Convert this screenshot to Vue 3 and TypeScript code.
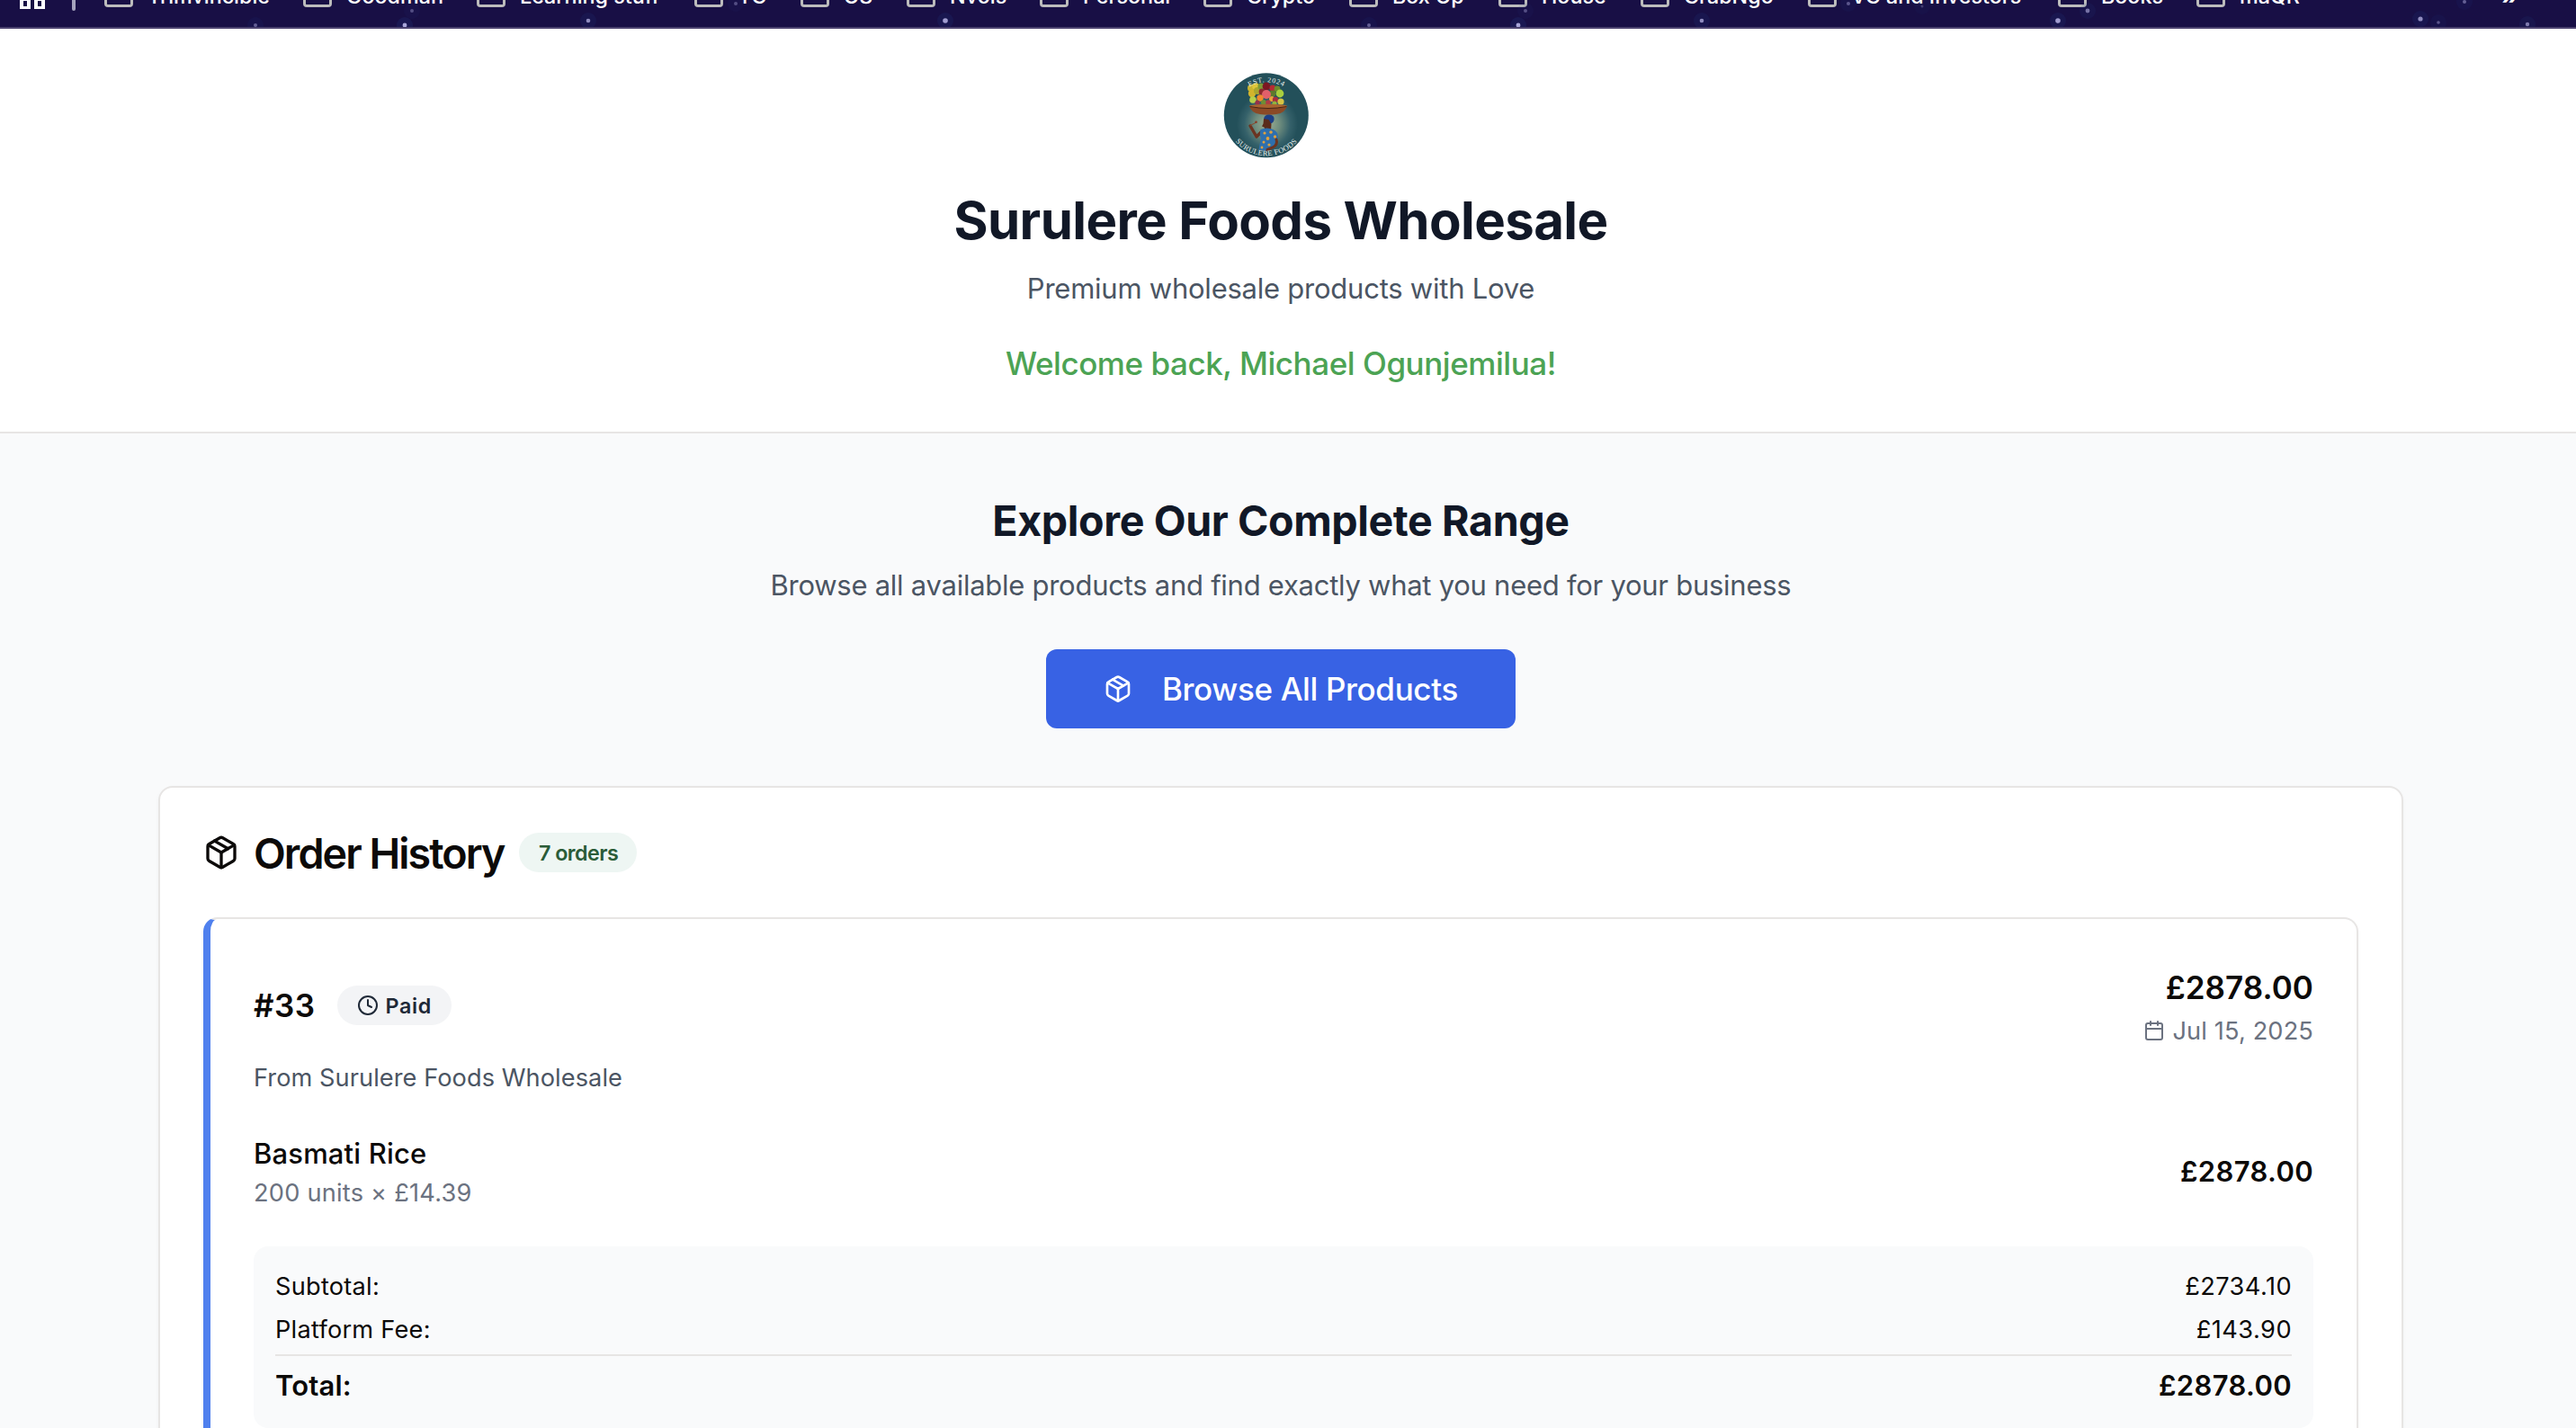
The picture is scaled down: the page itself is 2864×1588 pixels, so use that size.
<script setup lang="ts">
interface Bookmark {
  label: string
  width: number
}

// Width is the pitch from one folder to the next.
const bookmarks: Bookmark[] = [
  { label: 'Trimvincible', width: 221 },
  { label: 'Goodman', width: 193 },
  { label: 'Learning stuff', width: 242 },
  { label: 'YC', width: 118 },
  { label: 'US', width: 118 },
  { label: 'Nvois', width: 148 },
  { label: 'Personal', width: 182 },
  { label: 'Crypto', width: 162 },
  { label: 'Box Up', width: 166 },
  { label: 'House', width: 158 },
  { label: 'CrabNgo', width: 186 },
  { label: 'VC and Investors', width: 278 },
  { label: 'Books', width: 154 },
  { label: 'maQR', width: 120 },
]

interface Star {
  x: number
  y: number
  r: number
  o: number
}

const stars: Star[] = [
  { x: 284, y: 28, r: 2, o: 0.45 },
  { x: 450, y: 28, r: 2.4, o: 0.85 },
  { x: 458, y: 12, r: 2, o: 0.35 },
  { x: 654, y: 23, r: 2.3, o: 0.7 },
  { x: 818, y: 4, r: 2, o: 0.35 },
  { x: 1051, y: 23, r: 2.8, o: 0.8 },
  { x: 1522, y: 28, r: 2, o: 0.45 },
  { x: 1688, y: 28, r: 2.4, o: 0.85 },
  { x: 1696, y: 12, r: 2, o: 0.35 },
  { x: 1892, y: 23, r: 2.3, o: 0.7 },
  { x: 2055, y: 4, r: 2, o: 0.4 },
  { x: 2137, y: 7, r: 1.5, o: 0.25 },
  { x: 2288, y: 23, r: 2.8, o: 0.8 },
  { x: 2321, y: 12, r: 2.4, o: 0.55 },
  { x: 2691, y: 21, r: 2.6, o: 0.7 },
  { x: 2711, y: 25, r: 1.8, o: 0.4 },
  { x: 2740, y: 2, r: 2, o: 0.45 },
  { x: 2810, y: 27, r: 2.2, o: 0.6 },
]

interface Fruit {
  x: number
  y: number
  r: number
  c: string
}

const fruits: Fruit[] = [
  { x: 31, y: 18, r: 4, c: '#c9b52f' },
  { x: 36, y: 16, r: 3.8, c: '#dfc73a' },
  { x: 32, y: 24, r: 4.2, c: '#d3b42c' },
  { x: 38, y: 21, r: 4, c: '#a9a72f' },
  { x: 42, y: 16, r: 3.6, c: '#7d9a35' },
  { x: 48, y: 16, r: 4.4, c: '#7c1722' },
  { x: 55, y: 18, r: 3.6, c: '#b52a33' },
  { x: 60, y: 19, r: 3.4, c: '#6d8b2d' },
  { x: 43, y: 22, r: 3.4, c: '#8f2b2e' },
  { x: 55, y: 24, r: 3.4, c: '#5d7a2c' },
  { x: 63, y: 24, r: 4.4, c: '#a9cf3e' },
  { x: 48, y: 25, r: 5, c: '#e2606a' },
  { x: 33, y: 31, r: 3.8, c: '#b6cf4a' },
  { x: 41, y: 29, r: 3.7, c: '#f08a2c' },
  { x: 38, y: 34, r: 2.6, c: '#96314a' },
  { x: 45, y: 34, r: 3, c: '#6f8f33' },
  { x: 54, y: 30, r: 3, c: '#e8a13a' },
  { x: 50, y: 34, r: 2.8, c: '#b13a45' },
  { x: 58, y: 31, r: 3.2, c: '#a82f3d' },
  { x: 64, y: 33, r: 3.6, c: '#d6c444' },
  { x: 57, y: 35, r: 2.6, c: '#93b33c' },
]

const lines: { label: string; value: string }[] = [
  { label: 'Subtotal:', value: '£2734.10' },
  { label: 'Platform Fee:', value: '£143.90' },
]
</script>

<template>
  <div class="page">
    <nav class="bookmarks">
      <svg class="stars" width="2864" height="30" viewBox="0 0 2864 30">
        <g v-for="(s, i) in stars" :key="i">
          <circle :cx="s.x" :cy="s.y" r="9" fill="#23408a" :opacity="s.o * 0.22" />
          <circle :cx="s.x" :cy="s.y" :r="s.r" fill="#c3bff0" :opacity="s.o" />
        </g>
      </svg>
      <span class="apps"><i></i><i></i></span>
      <span class="divider"></span>
      <div class="folders">
        <div v-for="b in bookmarks" :key="b.label" class="bookmark" :style="{ width: b.width + 'px' }">
          <span class="folder"></span>
          <span class="bookmark-label">{{ b.label }}</span>
        </div>
      </div>
      <span class="more">»</span>
    </nav>

    <header class="hero">
      <div class="column">
        <svg class="logo" width="96" height="96" viewBox="0 0 96 96">
          <defs>
            <radialGradient id="glow" gradientUnits="userSpaceOnUse" cx="49" cy="58" r="34">
              <stop offset="0" stop-color="#9fb093" />
              <stop offset="0.4" stop-color="#6f8d7e" />
              <stop offset="0.75" stop-color="#35616a" />
              <stop offset="1" stop-color="#23505a" />
            </radialGradient>
            <path id="arcTop" d="M11 48.300a37 37 0 0 1 74 0" />
            <path id="arcBottom" d="M2.900 48.300a45 45 0 0 0 90 0" />
          </defs>
          <circle cx="47.8" cy="48.3" r="47" fill="url(#glow)" />
          <circle v-for="(f, i) in fruits" :key="i" :cx="f.x" :cy="f.y" :r="f.r" :fill="f.c" />
          <path d="M29 38q21 5 42 0q-2 7.500-12 9q-9 1.600-18 0q-10-1.500-12-9z" fill="#8b4a26" />
          <ellipse cx="50" cy="38" rx="21" ry="2.200" fill="#a9632f" />
          <path d="M29.500 38.500q20.500 4 41 0" fill="none" stroke="#4a2313" stroke-width="1" />
          <path d="M45 52.500q.5-5 6-5q6.500 .5 5.500 6q-1.500 5-6.500 4z" fill="#1c3f86" />
          <path d="M45 52l5.500 1 3 5-.5 7-6 1-1.500-4.500-2.500-1 1.500-3z" fill="#5a2b1b" />
          <path d="M42 67l-5 5-7-12" fill="none" stroke="#6b3421" stroke-width="3.400" stroke-linejoin="round" stroke-linecap="round" />
          <path d="M30 59.500l6-3" stroke="#8a4a2c" stroke-width="1" fill="none" />
          <circle cx="36.500" cy="55.800" r="1.300" fill="#8a3a24" />
          <path d="M41.500 64q7-3 14 0q5.500 2 5.500 10l-3 3-2 8q-8 4-16.500 1.500q1-7 2.500-12.500q-2-4-.5-10z" fill="#2e6fae" />
          <path d="M59 75q2 6-4 9l-6 2.500" fill="none" stroke="#6b3421" stroke-width="3" stroke-linecap="round" />
          <g fill="#e0a13d">
            <circle cx="46" cy="68" r="1.600" /><circle cx="53" cy="67" r="1.800" />
            <circle cx="57.500" cy="72" r="1.700" /><circle cx="49.500" cy="74" r="1.900" />
            <circle cx="45" cy="78" r="1.500" /><circle cx="51" cy="81" r="1.600" />
            <circle cx="43" cy="84" r="1.400" />
          </g>
          <text class="logo-text" font-size="8" letter-spacing="0.700">
            <textPath href="#arcTop" startOffset="50%" text-anchor="middle">EST. 2024</textPath>
          </text>
          <text class="logo-text" font-size="8.500" letter-spacing="0.300">
            <textPath href="#arcBottom" startOffset="50%" text-anchor="middle">SURULERE FOODS</textPath>
          </text>
        </svg>
        <h1>Surulere Foods Wholesale</h1>
        <p class="tagline">Premium wholesale products with Love</p>
        <p class="welcome">Welcome back, Michael Ogunjemilua!</p>
      </div>
    </header>

    <main class="column">
      <section class="explore">
        <h2>Explore Our Complete Range</h2>
        <p class="lead">Browse all available products and find exactly what you need for your business</p>
        <button class="browse" type="button">
          <svg class="icon" width="32" height="32" viewBox="0 0 24 24">
            <path d="m7.500 4.270 9 5.150" />
            <path d="M21 8a2 2 0 0 0-1-1.730l-7-4a2 2 0 0 0-2 0l-7 4A2 2 0 0 0 3 8v8a2 2 0 0 0 1 1.730l7 4a2 2 0 0 0 2 0l7-4A2 2 0 0 0 21 16Z" />
            <path d="m3.300 7 8.700 5 8.700-5" />
            <path d="M12 22V12" />
          </svg>
          <span>Browse All Products</span>
        </button>
      </section>

      <section class="card">
        <div class="card-head">
          <svg class="icon" width="40" height="40" viewBox="0 0 24 24">
            <path d="m7.500 4.270 9 5.150" />
            <path d="M21 8a2 2 0 0 0-1-1.730l-7-4a2 2 0 0 0-2 0l-7 4A2 2 0 0 0 3 8v8a2 2 0 0 0 1 1.730l7 4a2 2 0 0 0 2 0l7-4A2 2 0 0 0 21 16Z" />
            <path d="m3.300 7 8.700 5 8.700-5" />
            <path d="M12 22V12" />
          </svg>
          <span class="card-title">Order History</span>
          <span class="badge badge-count">7 orders</span>
        </div>

        <article class="order">
          <div class="order-head">
            <div class="order-id">
              <span class="number">#33</span>
              <span class="badge badge-paid">
                <svg class="icon" width="24" height="24" viewBox="0 0 24 24">
                  <circle cx="12" cy="12" r="10" />
                  <polyline points="12 6 12 12 16 14" />
                </svg>
                <span>Paid</span>
              </span>
            </div>
            <div class="order-sum">
              <div class="amount">£2878.00</div>
              <div class="date">
                <svg class="icon" width="24" height="24" viewBox="0 0 24 24">
                  <path d="M8 2v4" />
                  <path d="M16 2v4" />
                  <rect x="3" y="4" width="18" height="18" rx="2" />
                  <path d="M3 10h18" />
                </svg>
                <span>Jul 15, 2025</span>
              </div>
            </div>
          </div>
          <p class="from">From Surulere Foods Wholesale</p>

          <div class="item">
            <div>
              <div class="item-name">Basmati Rice</div>
              <div class="item-qty">200 units × £14.39</div>
            </div>
            <div class="item-price">£2878.00</div>
          </div>

          <div class="summary">
            <div v-for="l in lines" :key="l.label" class="line">
              <span>{{ l.label }}</span>
              <span class="line-value">{{ l.value }}</span>
            </div>
            <div class="total">
              <span>Total:</span>
              <span class="total-value">£2878.00</span>
            </div>
          </div>
        </article>
      </section>
    </main>
  </div>
</template>

<style>
body {
  background: #f9fafb;
}
</style>

<style scoped>
.page {
  width: 2864px;
  height: 1588px;
  overflow: hidden;
  background: #f9fafb;
  color: #0c0a09;
  font-family: Inter, "Liberation Sans", sans-serif;
}

.page * {
  box-sizing: border-box;
}

h1,
h2,
p {
  margin: 0;
  white-space: nowrap;
}

.bookmarks {
  position: relative;
  display: flex;
  align-items: flex-start;
  height: 32px;
  padding-left: 22px;
  overflow: hidden;
  border-bottom: 2px solid #4c4370;
  background: #180f45;
  color: #fff;
}

.stars {
  position: absolute;
  top: 0;
  left: 0;
}

.apps {
  display: flex;
  gap: 4px;
  width: 58px;
}

.apps i {
  width: 12px;
  height: 10px;
  border: solid #fff;
  border-width: 1px 4px 3px;
}

.divider {
  width: 4px;
  height: 12px;
  margin-right: 32px;
  border-radius: 0 0 2px 2px;
  background: #a5a3bd;
}

.folders {
  display: flex;
  width: 2665px;
}

.bookmark {
  display: flex;
  flex: none;
  gap: 16px;
  align-items: flex-start;
}

.folder {
  flex: none;
  width: 32px;
  height: 8px;
  border: 3px solid #bcbcbc;
  border-top: 0;
  border-radius: 0 0 4px 4px;
}

.bookmark-label,
.more {
  margin-top: -18px;
  font-size: 23.3px;
  font-weight: 500;
  line-height: 28px;
  white-space: nowrap;
}

.more {
  margin-top: -21px;
  font-size: 34px;
}

.hero {
  height: 450px;
  padding-top: 48px;
  border-bottom: 2px solid #e7e5e4;
  background: #fff;
}

.column {
  display: flex;
  flex-direction: column;
  align-items: center;
  width: 2848px;
}

.logo {
  display: block;
  margin-right: 32px;
}

.logo-text {
  fill: #e8efec;
  font-family: "Liberation Serif", serif;
}

h1 {
  margin-top: 32px;
  color: #111827;
  font-size: 58.2px;
  font-weight: 700;
  line-height: 74px;
  letter-spacing: -0.615px;
}

.tagline,
.lead {
  color: #4b5563;
  font-size: 31px;
  line-height: 48px;
}

.tagline {
  margin-top: 15px;
  letter-spacing: -0.24px;
}

.welcome {
  margin-top: 31px;
  color: #4ca354;
  font-size: 35px;
  font-weight: 500;
  line-height: 56px;
  letter-spacing: -0.45px;
}

.explore {
  display: flex;
  flex-direction: column;
  align-items: center;
  padding-top: 64px;
}

h2 {
  color: #111827;
  font-size: 46.6px;
  font-weight: 700;
  line-height: 67px;
  letter-spacing: -0.4px;
}

.lead {
  margin-top: 14px;
  letter-spacing: -0.265px;
}

.browse {
  display: flex;
  gap: 33px;
  align-items: center;
  width: 522px;
  height: 88px;
  margin-top: 47px;
  padding: 0 0 0 64px;
  border: 0;
  border-radius: 12px;
  background: #3862e4;
  color: #fff;
  font-family: inherit;
  font-size: 35px;
  font-weight: 500;
  line-height: 56px;
  letter-spacing: -0.36px;
  white-space: nowrap;
}

.icon {
  flex: none;
  fill: none;
  stroke: currentColor;
  stroke-width: 2;
  stroke-linecap: round;
  stroke-linejoin: round;
}

.card {
  width: 2496px;
  height: 900px;
  margin-top: 64px;
  padding: 48px;
  border: 2px solid #e7e5e4;
  border-radius: 16px;
  background: #fff;
  box-shadow: 0 2px 4px rgba(0, 0, 0, 0.04);
}

.card-head {
  display: flex;
  gap: 16px;
  align-items: center;
  height: 48px;
}

.card-title {
  width: 279px;
  padding-top: 2px;
  font-size: 46.6px;
  font-weight: 600;
  line-height: 50px;
  letter-spacing: -1.939px;
  white-space: nowrap;
}

.badge {
  display: flex;
  align-items: center;
  height: 44px;
  padding: 0 22px;
  border-radius: 22px;
  font-size: 23.3px;
  font-weight: 600;
  line-height: 32px;
  white-space: nowrap;
}

.badge-count {
  width: 131px;
  padding-top: 2px;
  background: #eef6f3;
  color: #2a5c38;
  letter-spacing: -0.539px;
}

.badge-paid {
  gap: 8px;
  width: 127px;
  background: #f3f4f6;
  color: #1f2937;
  letter-spacing: 0.6px;
}

.badge-paid span,
.date span {
  padding-top: 2px;
}

.order {
  height: 800px;
  margin-top: 48px;
  padding: 48px;
  border: 2px solid #e7e5e4;
  border-left: 8px solid #4f80ee;
  border-radius: 16px;
  box-shadow: 0 2px 4px rgba(0, 0, 0, 0.04);
}

.order-head {
  display: flex;
  align-items: center;
  justify-content: space-between;
  height: 96px;
}

.order-id {
  display: flex;
  gap: 24px;
  align-items: center;
}

.number {
  font-size: 35px;
  font-weight: 600;
  line-height: 56px;
  letter-spacing: 0.5px;
}

.order-sum {
  text-align: right;
}

.amount {
  font-size: 35px;
  font-weight: 600;
  line-height: 56px;
  letter-spacing: 0.05px;
}

.date {
  display: flex;
  gap: 8px;
  align-items: center;
  justify-content: flex-end;
  height: 40px;
  color: #6b7280;
  font-size: 27.2px;
  line-height: 40px;
  letter-spacing: 0.13px;
}

.from {
  margin-top: 13px;
  color: #4b5563;
  font-size: 27.2px;
  line-height: 40px;
  letter-spacing: 0.06px;
}

.item {
  display: flex;
  align-items: center;
  justify-content: space-between;
  margin-top: 39px;
}

.item-name {
  font-size: 31px;
  font-weight: 500;
  line-height: 50px;
  letter-spacing: 0.16px;
}

.item-qty {
  color: #6b7280;
  font-size: 27.2px;
  line-height: 38px;
  letter-spacing: 0.22px;
}

.item-price {
  font-size: 31px;
  font-weight: 600;
  line-height: 49px;
  letter-spacing: 0.35px;
}

.summary {
  margin-top: 40px;
  padding: 24px 24px 22px;
  border-radius: 16px;
  background: #f9fafb;
}

.line {
  display: flex;
  justify-content: space-between;
  margin-bottom: 6px;
  font-size: 27.2px;
  line-height: 42px;
  letter-spacing: 0.24px;
}

.line-value {
  letter-spacing: 0.45px;
}

.total {
  display: flex;
  justify-content: space-between;
  padding-top: 8px;
  border-top: 2px solid #e7e5e4;
  font-size: 31px;
  font-weight: 600;
  line-height: 50px;
  letter-spacing: 0.15px;
}

.total-value {
  letter-spacing: 0.35px;
}
</style>
